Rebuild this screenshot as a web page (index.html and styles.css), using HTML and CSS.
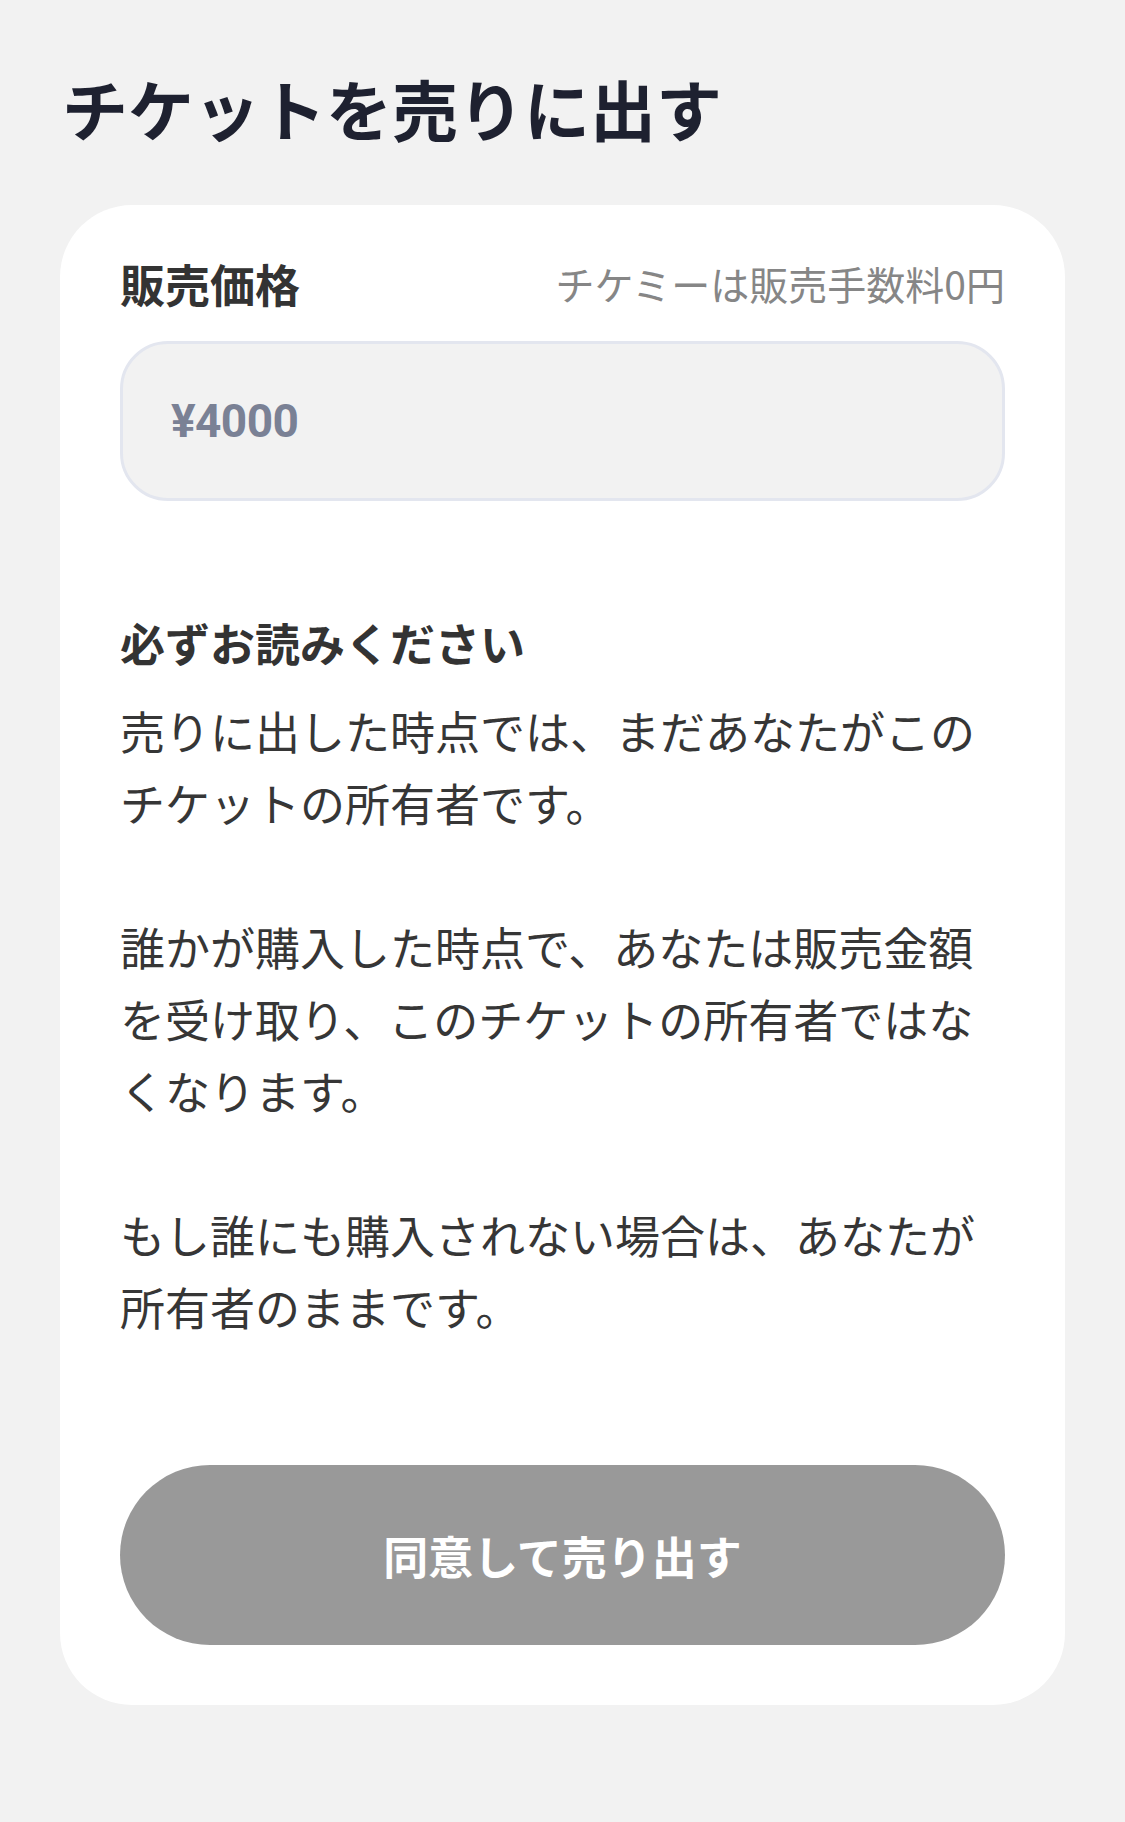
FILE: index.html
```html
<!DOCTYPE html>
<html lang="ja">
<head>
<meta charset="utf-8">
<title>チケットを売りに出す</title>
<link rel="stylesheet" href="styles.css">
</head>
<body>
<main class="page">
  <h1 class="title">チケットを売りに出す</h1>
  <section class="card">
    <div class="price-head">
      <span class="label">販売価格</span>
      <span class="note">チケミーは販売手数料0円</span>
    </div>
    <div class="price-input"><span class="price">¥4000</span></div>
    <h2 class="notice-title">必ずお読みください</h2>
    <div class="notice">
      <p>売りに出した時点では、まだあなたがこのチケットの所有者です。</p>
      <p>誰かが購入した時点で、あなたは販売金額を受け取り、このチケットの所有者ではなくなります。</p>
      <p>もし誰にも購入されない場合は、あなたが所有者のままです。</p>
    </div>
    <button class="submit" type="button">同意して売り出す</button>
  </section>
</main>
</body>
</html>
```

FILE: styles.css
```css
* { box-sizing: border-box; }
html, body {
  margin: 0;
  padding: 0;
  background: #f2f2f2;
}
body {
  font-family: "Noto Sans CJK JP", "Noto Sans", sans-serif;
  color: #333333;
}
.page {
  padding: 61px 60px 60px;
  display: flex;
  flex-direction: column;
}
.title {
  margin: 0 0 52px;
  font-size: 66px;
  line-height: 92px;
  font-weight: 700;
  color: #1e2130;
  padding-left: 2px;
}
.card {
  background: #ffffff;
  border-radius: 72px;
  padding: 56px 60px 60px;
  display: flex;
  flex-direction: column;
}
.price-head {
  display: flex;
  justify-content: space-between;
  align-items: center;
  height: 45px;
}
.label {
  font-size: 45px;
  line-height: 45px;
  font-weight: 700;
  color: #333333;
}
.note {
  font-size: 39px;
  line-height: 45px;
  color: #868686;
}
.price-input {
  margin-top: 35px;
  height: 160px;
  border: 3px solid #e3e6ef;
  border-radius: 48px;
  background: #f2f2f2;
  display: flex;
  align-items: center;
  padding-left: 48px;
}
.price {
  font-family: Roboto, "Liberation Sans", sans-serif;
  font-weight: 700;
  font-size: 46px;
  color: #7a8195;
  letter-spacing: -0.6px;
}
.notice-title {
  margin: 106px 0 0;
  font-size: 45px;
  line-height: 72px;
  font-weight: 700;
  color: #333333;
}
.notice {
  margin-top: 16px;
  display: flex;
  flex-direction: column;
  gap: 72px;
}
.notice p {
  margin: 0;
  font-size: 45px;
  line-height: 72px;
  font-weight: 400;
  color: #363636;
}
.submit {
  margin-top: 122px;
  height: 180px;
  border: none;
  border-radius: 90px;
  background: #999999;
  color: #ffffff;
  font-family: "Noto Sans CJK JP", sans-serif;
  font-size: 45px;
  font-weight: 700;
  padding: 0;
}
```
